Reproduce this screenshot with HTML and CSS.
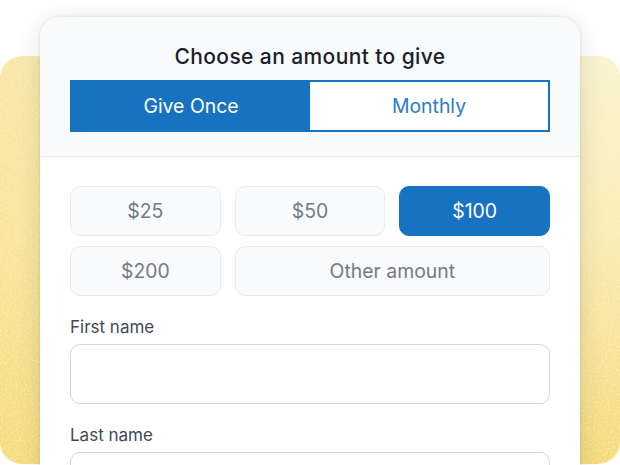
FILE: index.html
```html
<!DOCTYPE html>
<html lang="en">
<head>
    <meta charset="UTF-8">
    <meta name="viewport" content="width=device-width, initial-scale=1.0">
    <title>Choose an amount to give</title>
    <link rel="stylesheet" href="styles.css">
</head>
<body>
    <div class="stage">
        <div class="backdrop">
            <svg class="grain" width="620" height="408" aria-hidden="true">
                <filter id="noise">
                    <feTurbulence type="fractalNoise" baseFrequency="0.5" numOctaves="2" seed="4"/>
                    <feColorMatrix type="matrix" values="0 0 0 0 1  0 0 0 0 0.93  0 0 0 0 0.6  0 0 0 2.6 -1.1"/>
                </filter>
                <rect width="620" height="408" filter="url(#noise)"/>
            </svg>
        </div>
        <form class="card">
            <div class="card-head">
                <h1 class="title">Choose an amount to give</h1>
                <div class="toggle">
                    <button type="button" class="toggle-btn active">Give Once</button>
                    <button type="button" class="toggle-btn">Monthly</button>
                </div>
            </div>
            <div class="card-body">
                <div class="amounts">
                    <button type="button" class="amount">$25</button>
                    <button type="button" class="amount">$50</button>
                    <button type="button" class="amount selected">$100</button>
                    <button type="button" class="amount">$200</button>
                    <button type="button" class="amount other">Other amount</button>
                </div>
                <label class="field">
                    <span class="field-label">First name</span>
                    <input class="field-input" type="text">
                </label>
                <label class="field">
                    <span class="field-label">Last name</span>
                    <input class="field-input" type="text">
                </label>
            </div>
        </form>
    </div>
</body>
</html>
```

FILE: styles.css
```css
* {
    box-sizing: border-box;
}
html, body {
    height: 100%;
    margin: 0;
    overflow: hidden;
    background-color: #fff;
}
body {
    font-family: Inter, "Liberation Sans", sans-serif;
}
.stage {
    display: grid;
    height: 465px;
    overflow: hidden;
}
.backdrop, .card {
    grid-area: 1 / 1;
}
.backdrop {
    height: 408px;
    margin-top: 56px;
    border-radius: 22px;
    overflow: hidden;
    background:
        linear-gradient(90deg, rgba(247, 221, 130, 0.55) 0%, rgba(247, 221, 130, 0) 50%),
        linear-gradient(180deg, #fbf3d0 0%, #f9ebb4 45%, #f5d878 100%);
}
.grain {
    display: block;
    opacity: 0.55;
}
.card {
    z-index: 1;
    margin: 17px 40px 0;
    height: 600px;
    background-color: #fff;
    border-radius: 20px 20px 0 0;
    box-shadow: 0 0 3px rgba(60, 50, 20, 0.14), 0 4px 26px rgba(40, 40, 40, 0.13);
    overflow: hidden;
}
.card-head {
    height: 140px;
    padding: 26px 30px 0;
    background-color: #f8fafc;
    border-bottom: 1px solid #e8ebee;
}
.title {
    margin: 0 0 10px;
    font-size: 21px;
    line-height: 27px;
    font-weight: 500;
    letter-spacing: 0.4px;
    color: #1a202c;
    text-align: center;
}
.toggle {
    display: grid;
    grid-template-columns: 1fr 1fr;
    height: 52px;
    border: 2px solid #1773c2;
    background-color: #fff;
}
.toggle-btn {
    border: none;
    background: none;
    font: inherit;
    font-size: 19.4px;
    color: #2a7cc6;
}
.toggle-btn.active {
    background-color: #1773c2;
    color: #fff;
}
.card-body {
    padding: 29px 30px 0;
}
.amounts {
    display: grid;
    grid-template-columns: repeat(3, 1fr);
    gap: 10px 14px;
    margin-bottom: 20px;
}
.amount {
    height: 50px;
    border: 1px solid #e8ebee;
    border-radius: 10px;
    background-color: #f8fafc;
    font: inherit;
    font-size: 19.4px;
    color: #757a82;
}
.amount.selected {
    background-color: #1773c2;
    border-color: #1773c2;
    color: #fff;
}
.amount.other {
    grid-column: span 2;
}
.field {
    display: block;
    margin-bottom: 20px;
}
.field-label {
    display: block;
    margin-bottom: 6px;
    font-size: 17px;
    line-height: 22px;
    color: #414955;
}
.field-input {
    display: block;
    width: 100%;
    height: 60px;
    border: 1px solid #d5d8dc;
    border-radius: 10px;
    background-color: #fff;
}
```
